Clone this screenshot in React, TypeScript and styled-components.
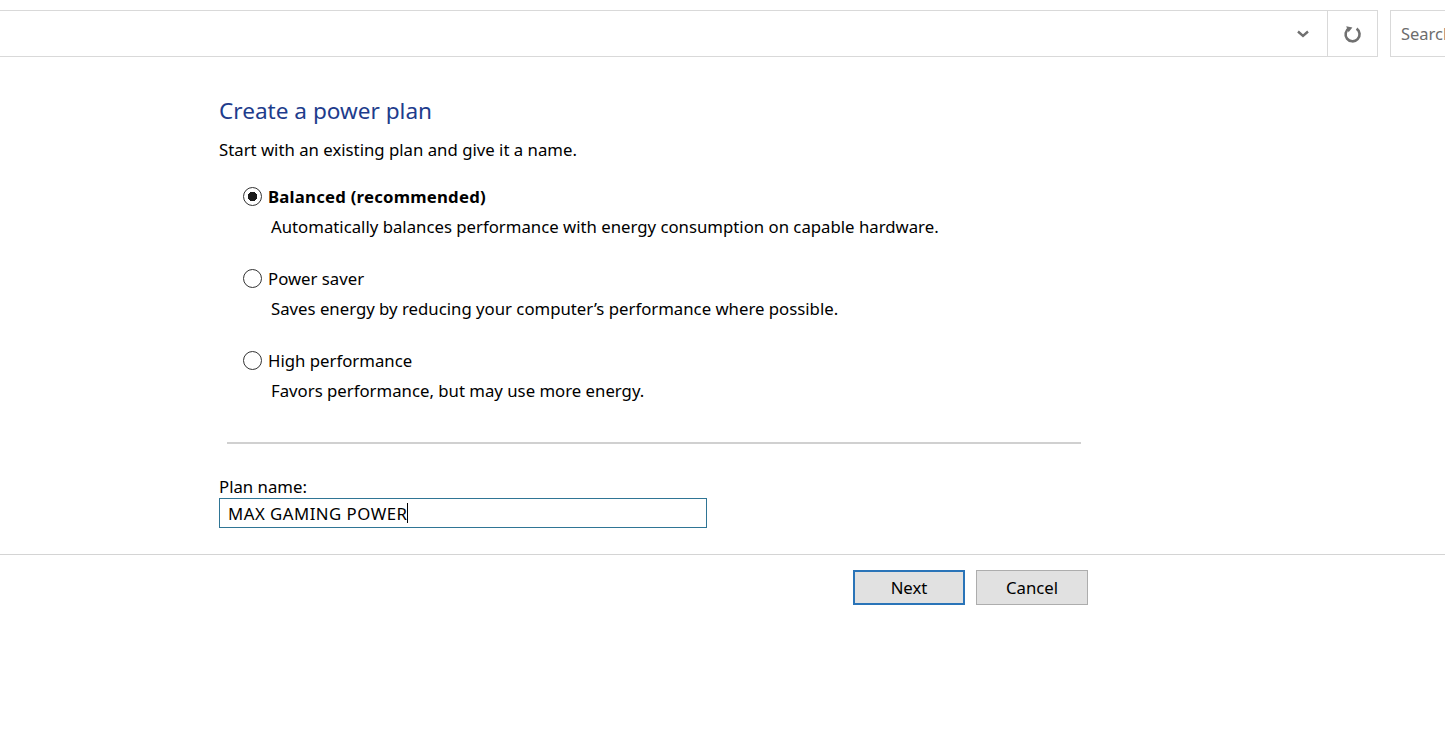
import styled, { createGlobalStyle } from "styled-components";

const GlobalStyle = createGlobalStyle`
    html, body {
        margin: 0;
        padding: 0;
        background: #ffffff;
        font-family: "Noto Sans", "Open Sans", sans-serif;
        color: #000000;
    }
`

const plans = [
    { name: "Balanced (recommended)", desc: "Automatically balances performance with energy consumption on capable hardware.", checked: true },
    { name: "Power saver", desc: "Saves energy by reducing your computer\u2019s performance where possible.", checked: false },
    { name: "High performance", desc: "Favors performance, but may use more energy.", checked: false },
]

export default function App() {
    return (
        <Page>
            <GlobalStyle />
            <TopBar>
                <AddressBox>
                    <div className="fill" />
                    <IconCell>
                        <svg width="14" height="10" viewBox="0 0 14 10">
                            <path d="M2 2.5 L7 7 L12 2.5" fill="none" stroke="#707070" strokeWidth="2.4" />
                        </svg>
                    </IconCell>
                    <IconCell $divider>
                        <svg width="20" height="20" viewBox="0 0 20 20">
                            <path d="M13.6 4.6 A7 7 0 1 1 6.2 4.2" fill="none" stroke="#707070" strokeWidth="2.6" />
                            <path d="M3.2 2.2 L9.4 3.4 L5.6 8.2 Z" fill="#707070" />
                        </svg>
                    </IconCell>
                </AddressBox>
                <SearchBox>Search</SearchBox>
            </TopBar>

            <Content>
                <Title>Create a power plan</Title>
                <Intro>Start with an existing plan and give it a name.</Intro>

                <PlanList>
                    {plans.map((p) => (
                        <Plan key={p.name}>
                            <Radio $checked={p.checked} />
                            <PlanName $bold={p.checked}>{p.name}</PlanName>
                            <PlanDesc>{p.desc}</PlanDesc>
                        </Plan>
                    ))}
                </PlanList>

                <Rule />

                <NameField>
                    <label>Plan name:</label>
                    <div className="input">
                        MAX GAMING POWER<span className="caret" />
                    </div>
                </NameField>
            </Content>

            <Footer>
                <Button $primary>Next</Button>
                <Button>Cancel</Button>
            </Footer>
        </Page>
    )
}

const Page = styled.main`
    width: 1445px;
    height: 755px;
    overflow: hidden;
    background: #ffffff;
`

const TopBar = styled.header`
    display: flex;
    align-items: stretch;
    gap: 12px;
    padding-top: 10px;
    height: 47px;
    margin-left: -1px;
`

const AddressBox = styled.div`
    display: flex;
    width: 1379px;
    border: 1px solid #d9d9d9;
    box-sizing: border-box;

    & .fill {
        flex: 1;
    }
`

const IconCell = styled.div<{ $divider?: boolean }>`
    width: 49px;
    display: flex;
    align-items: center;
    justify-content: center;
    border-left: ${(p) => (p.$divider ? "1px solid #d9d9d9" : "none")};
`

const SearchBox = styled.div`
    flex: 1;
    border: 1px solid #d9d9d9;
    border-right: none;
    box-sizing: border-box;
    padding-left: 10px;
    display: flex;
    align-items: center;
    font-size: 16.5px;
    color: #6d6d6d;
    white-space: nowrap;
    overflow: hidden;
`

const Content = styled.section`
    padding: 39px 0 0 219px;
    width: 862px;
`

const Title = styled.h1`
    margin: 0;
    font-weight: 400;
    font-size: 22.6px;
    line-height: 30px;
    color: #1e3c8c;
`

const Intro = styled.p`
    margin: 13px 0 0;
    font-size: 16.75px;
    line-height: 22px;
`

const PlanList = styled.div`
    display: flex;
    flex-direction: column;
    gap: 30px;
    margin-top: 24px;
    padding-left: 24px;
`

const Plan = styled.div`
    display: grid;
    grid-template-columns: 25px auto;
    grid-template-rows: 22px 22px;
    row-gap: 8px;
    align-items: center;
`

const Radio = styled.span<{ $checked?: boolean }>`
    width: 19px;
    height: 19px;
    box-sizing: border-box;
    border-radius: 50%;
    border: 1px solid #333333;
    background: ${(p) =>
        p.$checked ? "radial-gradient(circle, #1a1a1a 0 4.5px, #ffffff 5px)" : "#ffffff"};
`

const PlanName = styled.span<{ $bold?: boolean }>`
    font-size: 16.75px;
    font-weight: ${(p) => (p.$bold ? 700 : 400)};
    letter-spacing: ${(p) => (p.$bold ? "0.22px" : "0")};
`

const PlanDesc = styled.span`
    grid-column: 2;
    padding-left: 3px;
    font-size: 16.75px;
`

const Rule = styled.hr`
    margin: 41px 0 0 8px;
    border: none;
    border-top: 2px solid #d0d0d0;
`

const NameField = styled.div`
    display: flex;
    flex-direction: column;
    margin-top: 32px;

    & label {
        font-size: 16.75px;
        line-height: 22px;
    }

    & .input {
        width: 488px;
        height: 30px;
        box-sizing: border-box;
        border: 1px solid #2f7595;
        padding-left: 8px;
        display: flex;
        align-items: center;
        font-size: 16.75px;
        letter-spacing: 0.5px;
    }

    & .caret {
        width: 1px;
        height: 20px;
        background: #000000;
    }
`

const Footer = styled.footer`
    margin-top: 26px;
    border-top: 1px solid #d4d4d4;
    padding: 15px 0 0 853px;
    display: flex;
    gap: 11px;
`

const Button = styled.button<{ $primary?: boolean }>`
    width: 112px;
    height: 35px;
    box-sizing: border-box;
    background: #e1e1e1;
    border: ${(p) => (p.$primary ? "2px solid #2a74b8" : "1px solid #adadad")};
    font-family: inherit;
    font-size: 16.75px;
    color: #000000;
    padding: 0;
`
